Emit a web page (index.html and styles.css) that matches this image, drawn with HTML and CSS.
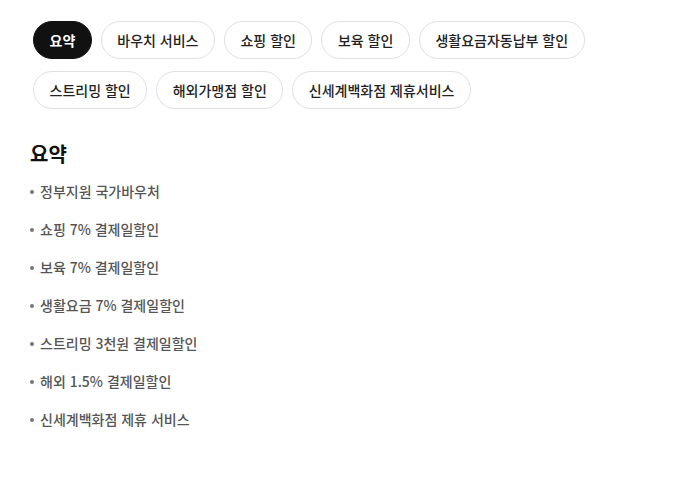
FILE: index.html
```html
<!DOCTYPE html>
<html lang="ko">
<head>
<meta charset="utf-8">
<link rel="stylesheet" href="styles.css">
</head>
<body>
<div class="page">
  <nav class="tabs">
    <span class="pill active">요약</span>
    <span class="pill">바우치 서비스</span>
    <span class="pill">쇼핑 할인</span>
    <span class="pill">보육 할인</span>
    <span class="pill">생활요금자동납부 할인</span>
    <span class="pill">스트리밍 할인</span>
    <span class="pill">해외가맹점 할인</span>
    <span class="pill">신세계백화점 제휴서비스</span>
  </nav>
  <section class="summary">
    <h2 class="title">요약</h2>
    <ul class="list">
      <li>정부지원 국가바우처</li>
      <li>쇼핑 7% 결제일할인</li>
      <li>보육 7% 결제일할인</li>
      <li>생활요금 7% 결제일할인</li>
      <li>스트리밍 3천원 결제일할인</li>
      <li>해외 1.5% 결제일할인</li>
      <li>신세계백화점 제휴 서비스</li>
    </ul>
  </section>
</div>
</body>
</html>
```
FILE: styles.css
```css
html, body {
  margin: 0;
  padding: 0;
  background: #fff;
}
body {
  font-family: "Noto Sans CJK KR", "Noto Sans", sans-serif;
  color: #111;
}
.page {
  padding: 21px 30px 0 30px;
}
.tabs {
  display: flex;
  flex-wrap: wrap;
  gap: 12px 9px;
  padding-left: 3px;
  width: 560px;
}
.pill {
  box-sizing: border-box;
  height: 38px;
  display: inline-flex;
  align-items: center;
  padding: 0 15.5px;
  border: 1px solid #e0e0e6;
  border-radius: 19px;
  font-size: 14px;
  font-weight: 500;
  color: #222;
  background: #fff;
  white-space: nowrap;
}
.pill.active {
  background: #111;
  border-color: #111;
  color: #fff;
  font-weight: 700;
}
.summary {
  margin-top: 31px;
}
.title {
  margin: 0;
  font-size: 20px;
  font-weight: 700;
  line-height: 28px;
  color: #111;
}
.list {
  list-style: none;
  margin: 13px 0 0 0;
  padding: 0;
}
.list li {
  position: relative;
  padding-left: 10px;
  font-size: 14px;
  line-height: 20px;
  font-weight: 500;
  color: #555;
  margin-bottom: 18px;
}
.list li::before {
  content: "";
  position: absolute;
  left: 0;
  top: 9px;
  width: 4px;
  height: 4px;
  border-radius: 50%;
  background: #777;
}
```
